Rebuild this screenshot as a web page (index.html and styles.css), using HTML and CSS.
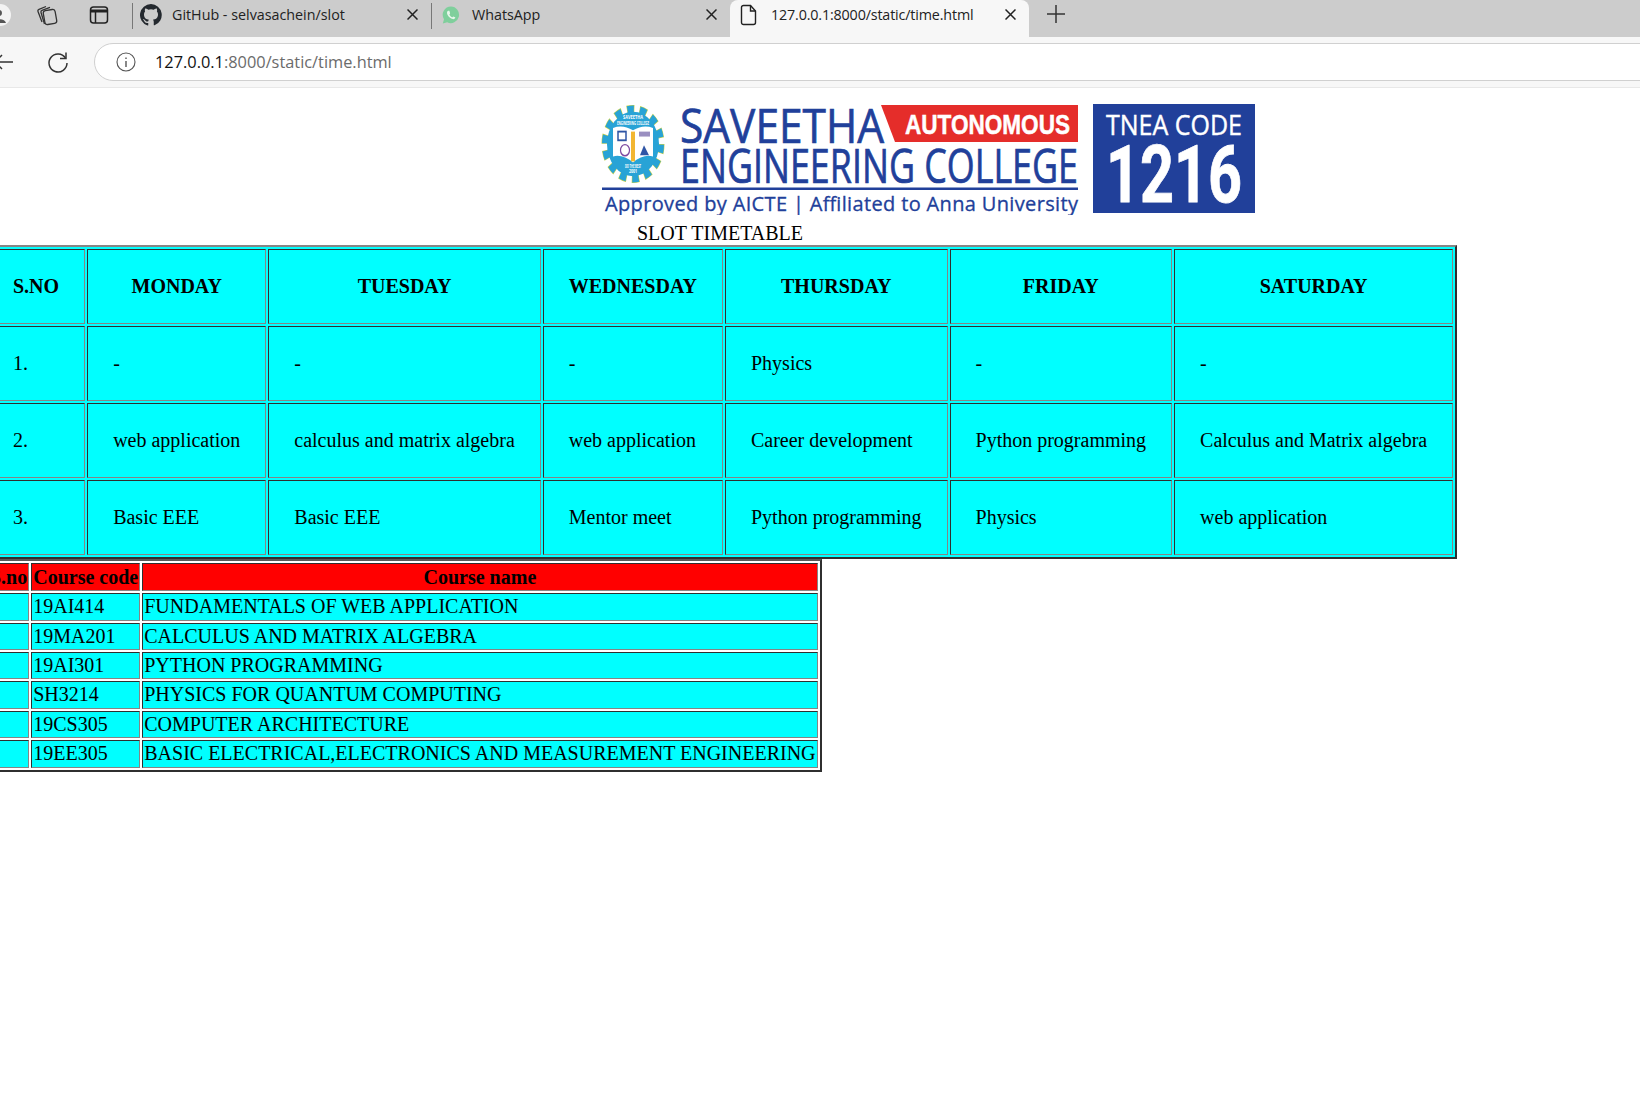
FILE: index.html
```html
<!DOCTYPE html>
<html lang="en">
<head>
    <meta charset="UTF-8">
    <title>127.0.0.1:8000/static/time.html</title>
    <link rel="stylesheet" href="styles.css">
</head>
<body>
    <div class="tabstrip">
        <svg class="profile" width="22" height="22" viewBox="0 0 22 22"><circle cx="11" cy="11" r="11" fill="#f3f3f3"/><circle cx="10" cy="9" r="3" fill="#555"/><path d="M3 19c1-5 13-5 14 0z" fill="#555"/></svg>
        <div class="strip-icon first-icon">
            <svg width="24" height="24" viewBox="0 0 24 24" fill="none" stroke="#333" stroke-width="1.300"><rect x="9" y="7" width="12" height="14" rx="2.500" transform="rotate(-10 15 14)"/><path d="M7 19 3 8.500c-.4-1 .2-1.900 1-2.200L11 3.500"/><path d="M9.500 21 6 9.500c-.3-1 .2-1.800 1-2.100l8-3"/></svg>
        </div>
        <div class="strip-icon second-icon">
            <svg width="20" height="20" viewBox="0 0 20 20" fill="none" stroke="#222" stroke-width="1.500"><rect x="1.500" y="2" width="17" height="16" rx="3"/><path d="M1.500 6h17" stroke-width="3"/><path d="M6.500 7v11"/></svg>
        </div>
        <div class="tab github-tab">
            <svg class="tab-icon" width="22" height="22" viewBox="0 0 16 16" fill="#24292f"><path d="M8 0a8 8 0 0 0-2.500 15.600c.4.100.5-.2.500-.4v-1.400c-2.200.5-2.700-1-2.700-1-.4-.9-.9-1.200-.9-1.200-.7-.5.100-.5.100-.5.800.1 1.200.8 1.200.8.700 1.200 1.900.9 2.300.7.100-.5.300-.9.500-1.100-1.800-.2-3.600-.9-3.600-4 0-.9.300-1.600.8-2.100-.1-.2-.4-1 .1-2.100 0 0 .7-.2 2.200.8a7.600 7.600 0 0 1 4 0c1.500-1 2.200-.8 2.200-.8.400 1.100.2 1.900.1 2.100.5.600.8 1.300.8 2.100 0 3.100-1.900 3.700-3.700 3.900.3.300.6.800.6 1.500v2.200c0 .2.100.5.600.4A8 8 0 0 0 8 0z"/></svg>
            <span class="tab-title">GitHub - selvasachein/slot</span>
            <svg class="tab-close" width="11" height="11" viewBox="0 0 11 11" stroke="#222" stroke-width="1.500"><path d="M.5.500l10 10M10.500.500l-10 10"/></svg>
        </div>
        <div class="tab whatsapp-tab">
            <svg class="tab-icon" width="20" height="20" viewBox="0 0 20 20"><path d="M10 1.500a8.300 8.300 0 0 0-7 12.700L1.800 18.500l4.400-1.200A8.300 8.300 0 1 0 10 1.500z" fill="#7fcf9c"/><path d="M7.300 5.800c-.5 0-1.300.7-1.300 2 0 2.500 3 5.800 6 6.300 1.300.2 2.200-.7 2.300-1.500 0-.4-1.700-1.300-2-1.200-.4.100-.6.900-1 .9-.8 0-2.800-1.900-2.900-2.700 0-.4.700-.7.700-1.100 0-.3-.6-2.700-.8-2.700z" fill="#e8f6ec"/></svg>
            <span class="tab-title">WhatsApp</span>
            <svg class="tab-close" width="11" height="11" viewBox="0 0 11 11" stroke="#222" stroke-width="1.500"><path d="M.5.500l10 10M10.500.500l-10 10"/></svg>
        </div>
        <div class="tab active-tab">
            <svg class="tab-icon" width="18" height="22" viewBox="0 0 18 22" fill="none" stroke="#222" stroke-width="1.400"><path d="M3.500 1.500h7l5 5.500v11.500a2 2 0 0 1-2 2h-10a2 2 0 0 1-2-2v-15a2 2 0 0 1 2-2z"/><path d="M10.500 1.500v5.500h5"/></svg>
            <span class="tab-title">127.0.0.1:8000/static/time.html</span>
            <svg class="tab-close" width="11" height="11" viewBox="0 0 11 11" stroke="#222" stroke-width="1.500"><path d="M.5.500l10 10M10.500.500l-10 10"/></svg>
        </div>
        <div class="new-tab">
            <svg width="20" height="20" viewBox="0 0 20 20" stroke="#333" stroke-width="1.500"><path d="M10 1v18M1 10h18"/></svg>
        </div>
    </div>
    <div class="addressbar">
        <svg class="back-icon" width="20" height="20" viewBox="0 0 20 20" fill="none" stroke="#333" stroke-width="1.500"><path d="M0 10h18M0 10l7-7M0 10l7 7"/></svg>
        <svg class="reload-icon" width="24" height="24" viewBox="0 0 24 24" fill="none" stroke="#333" stroke-width="1.500"><path d="M19.500 8A9 9 0 1 0 21 13"/><path d="M20 2.500V8.500H14"/></svg>
        <div class="url-pill">
            <svg class="info-icon" width="20" height="20" viewBox="0 0 20 20" fill="none" stroke="#555" stroke-width="1.100"><circle cx="10" cy="10" r="9"/><path d="M10 9v6" stroke-width="1.400"/><path d="M10 5.500v1.500" stroke-width="1.400"/></svg>
            <span class="url-host">127.0.0.1</span><span class="url-rest">:8000/static/time.html</span>
        </div>
    </div>

    <svg class="logo" width="655" height="112" viewBox="600 103 655 112">
        <!-- emblem, the original picture is stretched up and down -->
        <g transform="translate(633 144) scale(1 1.240) translate(-633 -144)">
            <circle cx="633" cy="144" r="27.500" fill="none" stroke="#c3cf4a" stroke-width="8" stroke-dasharray="7.300 5.040"/>
            <circle cx="633" cy="144" r="27.500" fill="none" stroke="#28a3d6" stroke-width="7" stroke-dasharray="6.300 6.040" stroke-dashoffset="-.5"/>
            <circle cx="633" cy="144" r="26" fill="#28a3d6"/>
            <path d="M613 131q10-3 20 2q10-5 20-2v23q-10-2-20 5q-10-7-20-5z" fill="#fff"/>
            <path d="M633 134v24" stroke="#f2b632" stroke-width="4"/>
            <rect x="618" y="134" width="8" height="7" fill="none" stroke="#2f55a5" stroke-width="1.500"/>
            <circle cx="625" cy="149" r="4.500" fill="none" stroke="#7d4aa0" stroke-width="1.200"/>
            <path d="M640 153l4-8 5 8z" fill="#2f55a5"/>
            <path d="M639 134h11v4h-11z" fill="#9a8fc0"/>
            <text class="emblem-text" x="633" y="124" text-anchor="middle" textLength="20" lengthAdjust="spacingAndGlyphs">SAVEETHA</text>
            <text class="emblem-text" x="633" y="128.500" text-anchor="middle" textLength="32" lengthAdjust="spacingAndGlyphs">ENGINEERING COLLEGE</text>
            <text class="emblem-text" x="633" y="163.500" text-anchor="middle" textLength="16" lengthAdjust="spacingAndGlyphs">DO THE BEST</text>
            <text class="emblem-text" x="633" y="167.500" text-anchor="middle" textLength="8" lengthAdjust="spacingAndGlyphs">2001</text>
        </g>

        <polygon points="881,105 1078,105 1078,142 895,142" fill="#e52d2a"/>
        <text class="logo-red" x="905" y="134" textLength="165" lengthAdjust="spacingAndGlyphs">AUTONOMOUS</text>
        <text class="logo-name" x="680" y="143" textLength="204" lengthAdjust="spacingAndGlyphs">SAVEETHA</text>
        <text class="logo-name" x="680" y="183" textLength="398" lengthAdjust="spacingAndGlyphs">ENGINEERING COLLEGE</text>
        <rect x="602" y="187.500" width="476" height="2.500" fill="#21409a"/>
        <text class="logo-sub" x="605" y="211" textLength="473" lengthAdjust="spacing">Approved by AICTE | Affiliated to Anna University</text>

        <rect x="1093" y="104" width="162" height="109" fill="#21409a"/>
        <text class="logo-tnea" x="1106" y="135" textLength="136" lengthAdjust="spacingAndGlyphs">TNEA CODE</text>
        <text class="logo-code" x="1106" y="202" textLength="136" lengthAdjust="spacingAndGlyphs">1216</text>
    </svg>

    <div class="slot-title">SLOT TIMETABLE</div>

    <table class="slot-table">
        <tr>
            <th>S.NO</th><th>MONDAY</th><th>TUESDAY</th><th>WEDNESDAY</th><th>THURSDAY</th><th>FRIDAY</th><th>SATURDAY</th>
        </tr>
        <tr>
            <td>1.</td><td>-</td><td>-</td><td>-</td><td>Physics</td><td>-</td><td>-</td>
        </tr>
        <tr>
            <td>2.</td><td>web application</td><td>calculus and matrix algebra</td><td>web application</td><td>Career development</td><td>Python programming</td><td>Calculus and Matrix algebra</td>
        </tr>
        <tr>
            <td>3.</td><td>Basic EEE</td><td>Basic EEE</td><td>Mentor meet</td><td>Python programming</td><td>Physics</td><td>web application</td>
        </tr>
    </table>

    <table class="course-table">
        <tr><th>S.no</th><th>Course code</th><th>Course name</th></tr>
        <tr class="tall"><td>1</td><td>19AI414</td><td>FUNDAMENTALS OF WEB APPLICATION</td></tr>
        <tr><td>2</td><td>19MA201</td><td>CALCULUS AND MATRIX ALGEBRA</td></tr>
        <tr><td>3</td><td>19AI301</td><td>PYTHON PROGRAMMING</td></tr>
        <tr class="tall"><td>4</td><td>SH3214</td><td>PHYSICS FOR QUANTUM COMPUTING</td></tr>
        <tr><td>5</td><td>19CS305</td><td>COMPUTER ARCHITECTURE</td></tr>
        <tr class="tall"><td>6</td><td>19EE305</td><td>BASIC ELECTRICAL,ELECTRONICS AND MEASUREMENT ENGINEERING</td></tr>
    </table>
</body>
</html>
```

FILE: styles.css
```css
html, body {
    margin: 0;
    padding: 0;
    background-color: #ffffff;
    overflow: hidden;
}
body {
    font-family: "Liberation Serif", serif;
    font-size: 20px;
    color: #000000;
    width: 1640px;
    height: 1117px;
}
.tabstrip {
    display: flex;
    align-items: stretch;
    height: 37px;
    background-color: #cccccc;
    font-family: "Open Sans", sans-serif;
    font-size: 14.300px;
    color: #222222;
}
.profile {
    margin-left: -11px;
    margin-top: 4px;
    flex: none;
}
.strip-icon {
    display: flex;
    flex: none;
    margin-top: 3px;
}
.first-icon {
    margin-left: 24px;
}
.second-icon {
    margin-left: 30px;
    margin-top: 5px;
}
.tab {
    display: flex;
    align-items: center;
    flex: none;
    box-sizing: border-box;
    padding-bottom: 8px;
}
.tab-title {
    flex: 1;
    white-space: nowrap;
}
.tab-close {
    flex: none;
}
.github-tab {
    width: 299px;
    margin-left: 23px;
    padding-left: 8px;
    padding-right: 13px;
    background: linear-gradient(#777777, #777777) left 3px / 1px 26px no-repeat;
}
.github-tab .tab-title {
    margin-left: 10px;
}
.whatsapp-tab {
    width: 299px;
    padding-left: 10px;
    padding-right: 13px;
    background: linear-gradient(#777777, #777777) left 3px / 1px 26px no-repeat;
}
.whatsapp-tab .tab-title {
    margin-left: 11px;
}
.active-tab {
    width: 299px;
    padding-left: 10px;
    padding-right: 13px;
    background-color: #f7f7f7;
    border-radius: 8px 8px 0 0;
}
.active-tab .tab-title {
    margin-left: 13px;
    letter-spacing: -0.150px;
}
.new-tab {
    display: flex;
    margin-left: 17px;
    margin-top: 4px;
}
.addressbar {
    display: flex;
    align-items: center;
    height: 49px;
    padding-bottom: 1px;
    background-color: #f7f7f7;
    border-bottom: 1px solid #e8e8e8;
}
.back-icon {
    margin-left: -5px;
    flex: none;
}
.reload-icon {
    margin-left: 31px;
    flex: none;
}
.url-pill {
    display: flex;
    align-items: center;
    flex: none;
    margin-left: 24px;
    width: 1600px;
    height: 38px;
    box-sizing: border-box;
    padding-left: 21px;
    background-color: #ffffff;
    border: 1px solid #d0d0d0;
    border-radius: 19px;
    font-family: "Open Sans", sans-serif;
    font-size: 16.350px;
}
.info-icon {
    margin-right: 19px;
}
.url-host {
    color: #111111;
}
.url-rest {
    color: #6b6b6b;
}
.logo {
    display: block;
    margin-left: 600px;
    margin-top: 15px;
}
.logo text {
    font-family: "Open Sans", sans-serif;
}
.logo .logo-red {
    font-family: "Liberation Sans", sans-serif;
    font-size: 28px;
    font-weight: 700;
    fill: #ffffff;
    stroke: #ffffff;
    stroke-width: 0.500px;
}
.emblem-text {
    font-size: 3.500px;
    font-weight: 700;
    fill: #ffffff;
}
.logo-name {
    font-size: 48px;
    fill: #21409a;
    stroke: #21409a;
    stroke-width: 0.700px;
}
.logo-sub {
    font-size: 20px;
    fill: #21409a;
    stroke: #21409a;
    stroke-width: 0.300px;
}
.logo-tnea {
    font-size: 27px;
    fill: #ffffff;
    stroke: #ffffff;
    stroke-width: 0.400px;
}
.logo .logo-code {
    font-family: Roboto, sans-serif;
    font-size: 80px;
    font-weight: 700;
    fill: #ffffff;
    stroke: #ffffff;
    stroke-width: 0.800px;
}
.slot-title {
    margin-left: 637px;
    margin-top: 7px;
    line-height: 23px;
}
.slot-table, .course-table {
    border-style: solid;
    border-color: #2f2f2f;
    border-top-color: #858585;
    border-left-color: #858585;
    background-color: #00ffff;
}
.slot-table {
    margin-left: -18px;
    border-width: 2px 2px 2px 3px;
    border-spacing: 2px;
}
.course-table {
    margin-left: -16px;
    border-width: 2px;
    border-top-color: #5a5a5a;
    border-spacing: 2px;
    background-color: #ffffff;
}
th, td {
    border: 1px solid;
    border-color: #2f2f2f #858585 #858585 #2f2f2f;
    background-color: #00ffff;
    font-size: 20px;
    line-height: 23px;
}
.slot-table th, .slot-table td {
    padding: 25px;
}
.course-table th, .course-table td {
    padding: 1px;
    text-align: left;
}
.course-table th {
    background-color: #ff0000;
    text-align: center;
    padding-top: 2px;
}
.course-table .tall td {
    padding-bottom: 2px;
}
```
